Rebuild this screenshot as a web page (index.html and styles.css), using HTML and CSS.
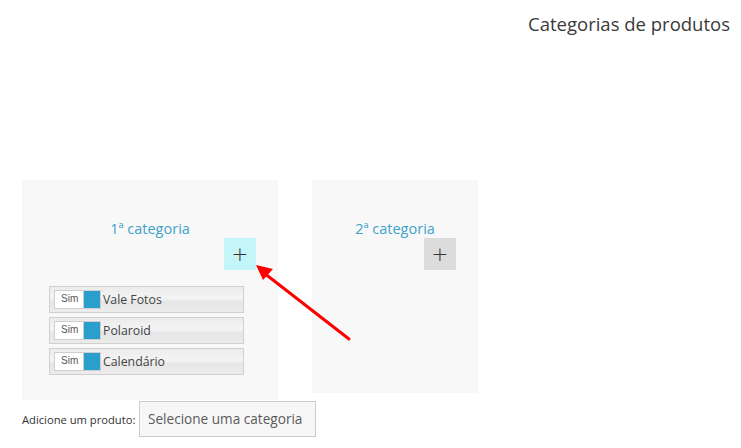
FILE: index.html
```html
<!DOCTYPE html>
<html lang="pt">
<head>
<meta charset="utf-8">
<title>Categorias de produtos</title>
<link rel="stylesheet" href="styles.css">
</head>
<body>
<div class="page">
  <h1 class="page-title">Categorias de produtos</h1>
  <div class="panels">
    <section class="panel panel-first">
      <h2 class="panel-title">1ª categoria</h2>
      <div class="add-row"><button class="add-btn add-btn-active">+</button></div>
      <ul class="items">
        <li class="item"><span class="toggle"><span class="toggle-label">Sim</span><span class="toggle-knob"></span></span><span class="item-name">Vale Fotos</span></li>
        <li class="item"><span class="toggle"><span class="toggle-label">Sim</span><span class="toggle-knob"></span></span><span class="item-name">Polaroid</span></li>
        <li class="item"><span class="toggle"><span class="toggle-label">Sim</span><span class="toggle-knob"></span></span><span class="item-name">Calendário</span></li>
      </ul>
    </section>
    <section class="panel panel-second">
      <h2 class="panel-title">2ª categoria</h2>
      <div class="add-row"><button class="add-btn">+</button></div>
    </section>
  </div>
  <div class="add-product">
    <span class="add-label">Adicione um produto:</span>
    <div class="select">Selecione uma categoria</div>
  </div>
  <svg class="arrow" width="110" height="90" viewBox="0 0 110 90">
    <line x1="14" y1="14" x2="99" y2="80" stroke="#f00" stroke-width="3" stroke-linecap="round"/>
    <polygon points="6,6 23,10 13,21" fill="#f00"/>
  </svg>
</div>
</body>
</html>
```
FILE: styles.css
```css
* { box-sizing: border-box; }
html, body { margin: 0; padding: 0; background: #fff; }
body { font-family: "Open Sans", "Liberation Sans", sans-serif; color: #444; }
.page { position: relative; width: 741px; height: 448px; }
.page-title {
  margin: 0;
  padding: 11px 11px 0 0;
  text-align: right;
  font-size: 18.5px;
  font-weight: 400;
  line-height: 26px;
  color: #3a3a3a;
}
.panels {
  display: flex;
  align-items: flex-start;
  gap: 34px;
  margin: 143px 0 0 22px;
}
.panel { background: #f8f8f8; padding-top: 39px; }
.panel-first { width: 256px; height: 220px; }
.panel-second { width: 166px; height: 213px; }
.panel-title {
  margin: 0;
  text-align: center;
  font-size: 14.5px;
  font-weight: 400;
  line-height: 19px;
  color: #3ea3c8;
}
.add-row { display: flex; justify-content: flex-end; padding-right: 22px; }
.add-btn {
  width: 32px; height: 32px;
  border: 0; padding: 0; margin: 0;
  background: #dcdcdc;
  font-family: "DejaVu Sans", sans-serif;
  font-size: 20px;
  font-weight: 300;
  line-height: 32px;
  color: #333;
}
.add-btn-active { background: #c4f6f9; }
.items {
  list-style: none;
  margin: 16px 0 0 27px;
  padding: 0;
  display: flex;
  flex-direction: column;
  gap: 4px;
}
.item {
  width: 195px; height: 27px;
  border: 1px solid #d0d0d0;
  background: linear-gradient(#ececec 0%, #f4f4f4 45%, #e6e6e6 60%, #ececec 100%);
  display: flex;
  align-items: center;
  padding-left: 4px;
}
.toggle { display: flex; height: 19px; border: 1px solid #cfcfcf; }
.toggle-label {
  width: 28px;
  background: #fff;
  font-family: "Liberation Sans", Arial, sans-serif;
  font-size: 10px;
  line-height: 16px;
  color: #555;
  padding-left: 6px;
}
.toggle-knob { width: 17px; background: #2a9fcb; border-left: 1px solid #ccc; }
.item-name { margin-left: 2px; font-size: 12.3px; color: #444; }
.add-product { display: flex; align-items: center; margin: 1px 0 0 22px; }
.add-label { width: 117px; font-size: 11.2px; color: #333; }
.select {
  width: 177px; height: 36px;
  border: 1px solid #ccc;
  background: #f7f7f7;
  font-size: 13.6px;
  line-height: 34px;
  padding-left: 8px;
  color: #5a5a5a;
}
.arrow { position: absolute; left: 250px; top: 259px; }
```
